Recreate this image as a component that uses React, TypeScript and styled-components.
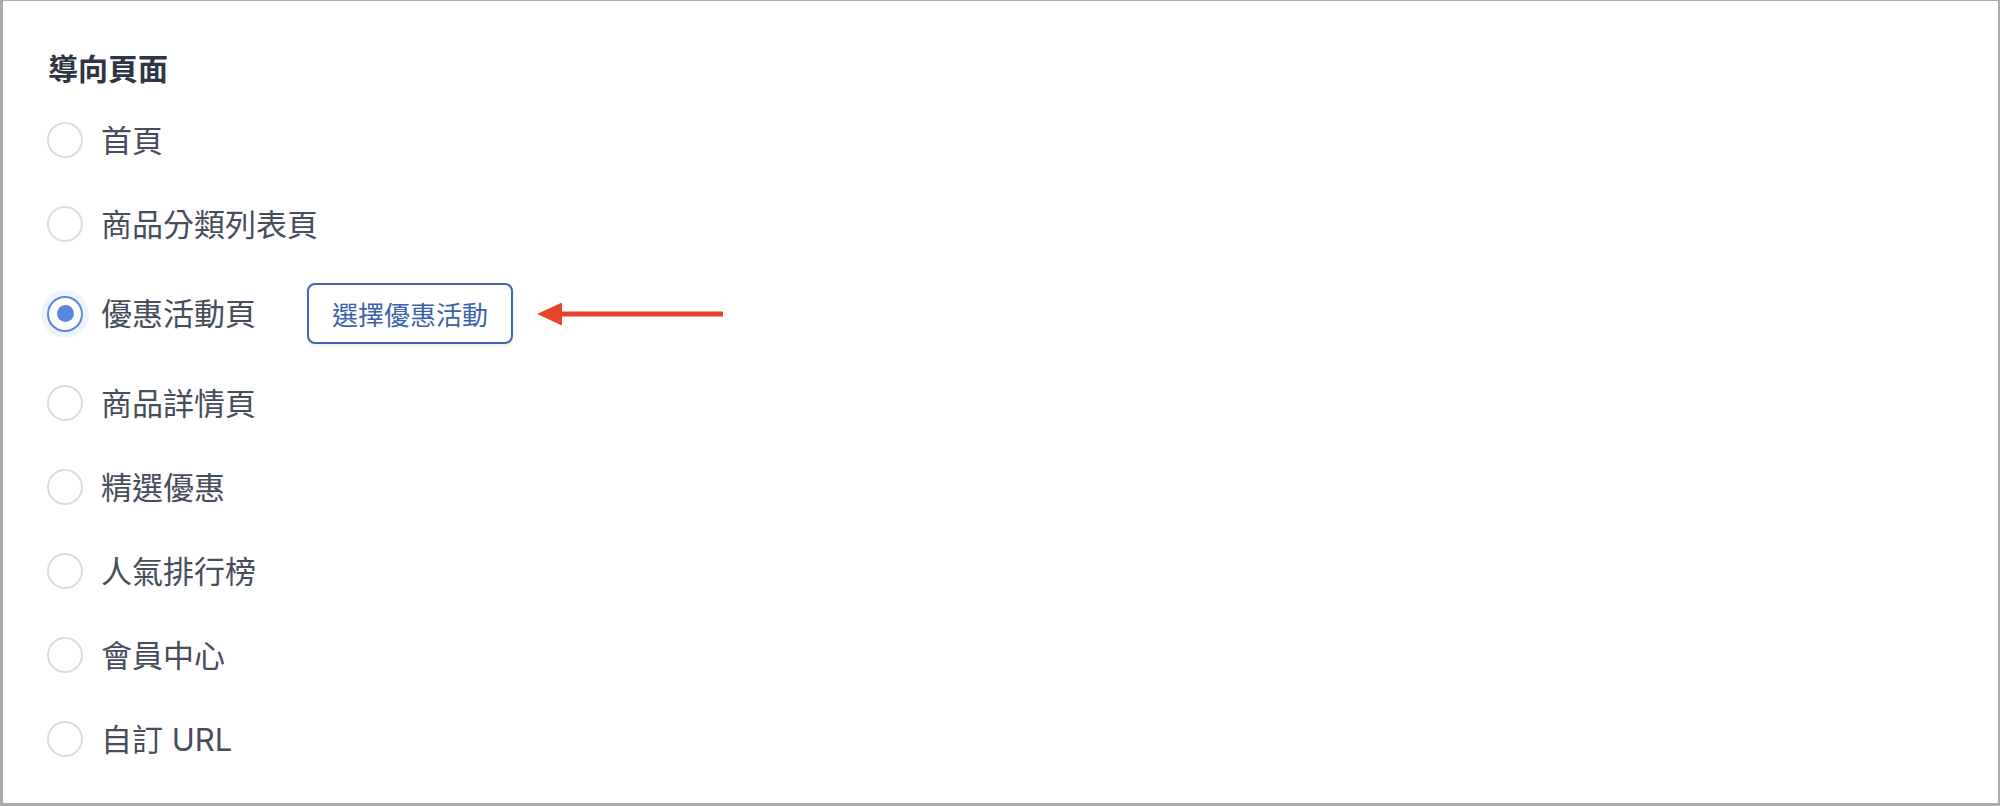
import React, { useState } from "react";
import styled, { createGlobalStyle } from "styled-components";

const GlobalStyle = createGlobalStyle`
  html, body { margin: 0; padding: 0; background: #ffffff; }
  * { box-sizing: border-box; }
`;

const Frame = styled.div`
  width: 2000px;
  height: 806px;
  border-style: solid;
  border-color: #ababab;
  border-width: 1px 2px 3px 3px;
  background: #ffffff;
  padding: 44px 0 0 44px;
  font-family: "Inter", "Noto Sans CJK TC", sans-serif;
`;

const Title = styled.h2`
  margin: 0 0 25px 1px;
  font-size: 30px;
  line-height: 45px;
  font-weight: 700;
  color: #2e3544;
  font-family: "Noto Sans CJK TC", sans-serif;
`;

const List = styled.div`
  display: flex;
  flex-direction: column;
  gap: 34px;
`;

const Row = styled.label`
  display: flex;
  align-items: center;
  min-height: 50px;
  cursor: pointer;
`;

const RadioOuter = styled.span<{ $checked: boolean }>`
  position: relative;
  flex: none;
  width: 36px;
  height: 36px;
  border-radius: 50%;
  border: 2px solid ${(p) => (p.$checked ? "#5b87dd" : "#d6dee7")};
  background: #ffffff;
  display: flex;
  align-items: center;
  justify-content: center;
  box-shadow: ${(p) => (p.$checked ? "0 0 0 6px #eef3fc" : "none")};
`;

const RadioDot = styled.span`
  width: 17px;
  height: 17px;
  border-radius: 50%;
  background: #5b87dd;
`;

const Label = styled.span`
  margin-left: 18px;
  font-size: 31px;
  line-height: 45px;
  color: #474d5b;
  font-family: "Inter", "Noto Sans CJK TC", sans-serif;
`;

const SelectButton = styled.button`
  margin-left: 51px;
  height: 61px;
  width: 206px;
  padding: 0;
  border: 2px solid #3f66b1;
  border-radius: 8px;
  background: #ffffff;
  color: #3c62ad;
  font-size: 26px;
  font-family: "Noto Sans CJK TC", sans-serif;
  box-shadow: 0 2px 3px rgba(0, 0, 0, 0.07);
  cursor: pointer;
`;

const ArrowWrap = styled.span`
  margin-left: 24px;
  display: flex;
  align-items: center;
`;

const Arrow = () => (
  <ArrowWrap>
    <svg width="187" height="26" viewBox="0 0 187 26">
      <polygon points="0,13 25,1.5 25,24.5" fill="#e6432b" />
      <rect x="23" y="10.5" width="163" height="5" fill="#e6432b" />
    </svg>
  </ArrowWrap>
);

const options = [
  "首頁",
  "商品分類列表頁",
  "優惠活動頁",
  "商品詳情頁",
  "精選優惠",
  "人氣排行榜",
  "會員中心",
  "自訂 URL",
];

export default function App() {
  const [selected, setSelected] = useState(2);
  return (
    <>
      <GlobalStyle />
      <Frame>
        <Title>導向頁面</Title>
        <List>
          {options.map((o, i) => (
            <Row key={o} onClick={() => setSelected(i)}>
              <RadioOuter $checked={selected === i}>
                {selected === i && <RadioDot />}
              </RadioOuter>
              <Label>{o}</Label>
              {i === 2 && (
                <>
                  <SelectButton type="button">選擇優惠活動</SelectButton>
                  <Arrow />
                </>
              )}
            </Row>
          ))}
        </List>
      </Frame>
    </>
  );
}
